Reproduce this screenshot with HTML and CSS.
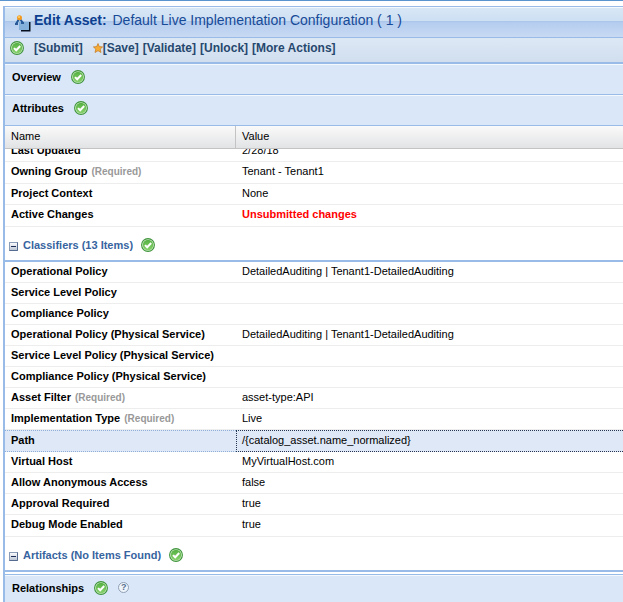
FILE: index.html
```
<!DOCTYPE html>
<html lang="en">
<head>
<meta charset="utf-8">
<title>Edit Asset</title>
<link rel="stylesheet" href="styles.css">
</head>
<body>
<svg class="defs" aria-hidden="true">
  <defs>
    <linearGradient id="green" x1="0" y1="0" x2="0" y2="1">
      <stop offset="0" stop-color="#55b043"/>
      <stop offset="1" stop-color="#86d26b"/>
    </linearGradient>
    <linearGradient id="metal" x1="0" y1="0" x2="0" y2="1">
      <stop offset="0" stop-color="#ffffff"/>
      <stop offset="1" stop-color="#b9c3d3"/>
    </linearGradient>
    <symbol id="check" viewBox="0 0 14 14">
      <circle cx="7" cy="7" r="6.4" fill="#d5efcc" stroke="#3f943c" stroke-width="1.1"/>
      <circle cx="7" cy="7" r="5.2" fill="url(#green)"/>
      <path d="M4 7.1 6.2 9.300 10.200 5" fill="none" stroke="#fff" stroke-width="2"/>
    </symbol>
    <symbol id="collapse" viewBox="0 0 9 9">
      <rect x=".5" y=".5" width="8" height="8" fill="url(#metal)" stroke="#8a9cb8"/>
      <path d="M.5 8.500h8v-8" fill="none" stroke="#566b90"/>
      <path d="M2 4.500h5" stroke="#1d2f57"/>
    </symbol>
  </defs>
</svg>
<main class="panel">
  <header class="title">
    <svg class="asset-icon" viewBox="0 0 16 17" aria-hidden="true">
      <path d="M6 7h9.500v9.500H6V15h8V7z" fill="#07101f"/>
      <path d="M4 7h2l1-1 2 1h5v8H4z" fill="#84b1dc"/>
      <path d="M4 4 1 9M5 4l3 4" stroke="#23599a" stroke-width="2" fill="none"/>
      <path d="M0 8h3v2H0zM6 7h3v2H6z" fill="#285b98"/>
      <circle cx="4.500" cy="2.800" r="2.500" fill="#f39a1d"/>
      <circle cx="4" cy="2" r="1" fill="#ffd26a"/>
    </svg>
    <h1><b>Edit Asset:</b> Default Live Implementation Configuration ( 1 )</h1>
  </header>
  <div class="toolbar">
    <svg class="check" aria-hidden="true"><use href="#check"/></svg>
    <button class="submit" type="button">[Submit]</button>
    <button class="save" type="button"><svg class="star" viewBox="0 0 10 10" aria-hidden="true"><path d="M5 .5 6.300 3.600 9.600 3.900 7.200 6.100 8 9.500 5 7.700 2 9.500 2.800 6.100 .4 3.900 3.700 3.600z" fill="#f7ac35" stroke="#c17820" stroke-width=".7"/></svg>[Save]</button>
    <button type="button">[Validate]</button>
    <button type="button">[Unlock]</button>
    <button type="button">[More Actions]</button>
  </div>
  <section class="band">
    <h2>Overview</h2>
    <svg class="check" aria-hidden="true"><use href="#check"/></svg>
  </section>
  <section class="band">
    <h2>Attributes</h2>
    <svg class="check" aria-hidden="true"><use href="#check"/></svg>
  </section>
  <table class="columns">
    <thead><tr><th class="name" scope="col">Name</th><th scope="col">Value</th></tr></thead>
  </table>
  <div class="scroller">
    <table class="rows scrolled">
      <tbody>
        <tr><th scope="row">Last Updated</th><td>2/28/18</td></tr>
        <tr class="tall"><th scope="row">Owning Group <small>(Required)</small></th><td>Tenant - Tenant1</td></tr>
        <tr><th scope="row">Project Context</th><td>None</td></tr>
        <tr class="tall"><th scope="row">Active Changes</th><td class="alert">Unsubmitted changes</td></tr>
      </tbody>
    </table>
    <div class="group">
      <button type="button"><svg class="collapse" aria-hidden="true"><use href="#collapse"/></svg>Classifiers (13 Items)</button>
      <svg class="check" aria-hidden="true"><use href="#check"/></svg>
    </div>
    <table class="rows">
      <tbody>
        <tr><th scope="row">Operational Policy</th><td>DetailedAuditing | Tenant1-DetailedAuditing</td></tr>
        <tr><th scope="row">Service Level Policy</th><td></td></tr>
        <tr><th scope="row">Compliance Policy</th><td></td></tr>
        <tr><th scope="row">Operational Policy (Physical Service)</th><td>DetailedAuditing | Tenant1-DetailedAuditing</td></tr>
        <tr><th scope="row">Service Level Policy (Physical Service)</th><td></td></tr>
        <tr><th scope="row">Compliance Policy (Physical Service)</th><td></td></tr>
        <tr><th scope="row">Asset Filter <small>(Required)</small></th><td>asset-type:API</td></tr>
        <tr><th scope="row">Implementation Type <small>(Required)</small></th><td>Live</td></tr>
        <tr class="tall selected"><th scope="row">Path</th><td>/{catalog_asset.name_normalized}</td></tr>
        <tr><th scope="row">Virtual Host</th><td>MyVirtualHost.com</td></tr>
        <tr><th scope="row">Allow Anonymous Access</th><td>false</td></tr>
        <tr><th scope="row">Approval Required</th><td>true</td></tr>
        <tr class="tall"><th scope="row">Debug Mode Enabled</th><td>true</td></tr>
      </tbody>
    </table>
    <div class="group">
      <button type="button"><svg class="collapse" aria-hidden="true"><use href="#collapse"/></svg>Artifacts (No Items Found)</button>
      <svg class="check" aria-hidden="true"><use href="#check"/></svg>
    </div>
  </div>
  <section class="band last">
    <h2>Relationships</h2>
    <svg class="check" aria-hidden="true"><use href="#check"/></svg>
    <button class="help" type="button" aria-label="Help">?</button>
  </section>
</main>
</body>
</html>
```
FILE: styles.css
```
* { box-sizing: border-box; }

body {
  margin: 0;
  min-height: 100vh;
  display: flex;
  flex-direction: column;
  border-top: 1px solid #5b93cf;
  padding: 5px 0 0 3px;
  background: #fff;
  color: #000;
  font: 11px/14px "Liberation Sans", Arial, sans-serif;
}

h1, h2 { margin: 0; font-size: 11px; }

button {
  display: flex;
  align-items: center;
  margin: 0;
  padding: 0;
  border: 0;
  background: none;
  color: inherit;
  font: inherit;
  white-space: nowrap;
  cursor: pointer;
}

.defs { position: absolute; width: 0; height: 0; }

.panel {
  flex: 1;
  display: flex;
  flex-direction: column;
  border-left: 2px solid #99bbe8;
}

.title {
  display: flex;
  align-items: center;
  gap: 3px;
  height: 32px;
  padding: 0 10px;
  border-top: 1px solid #99bbe8;
  border-bottom: 1px solid #99bbe8;
  box-shadow: inset 0 1px #f4f9fe;
  background: linear-gradient(#d9e8f6 0, #cddff3 14px, #a9c4e8 14px, #b5cdef 16px, #c8daf3 100%);
}
.title h1 {
  padding-bottom: 3px;
  color: #174a97;
  font-size: 14px;
  line-height: 17px;
  font-weight: 400;
  white-space: nowrap;
}
.title b { margin-right: 2px; color: #0c3f8f; }
.asset-icon { width: 16px; height: 17px; margin-top: 2px; }

.toolbar {
  display: flex;
  align-items: center;
  gap: 4px;
  height: 26px;
  padding: 0 5px 4px;
  border-bottom: 2px solid #99bbe8;
  background: linear-gradient(#dde8f5, #d0deee);
  color: #26486e;
  font-size: 12px;
  font-weight: 700;
}
.toolbar .submit,
.toolbar .save { margin-left: 6px; }

.check { flex: none; width: 14px; height: 14px; }
.star { width: 10px; height: 10px; }

.band {
  display: flex;
  align-items: center;
  gap: 10px;
  height: 31px;
  padding: 0 7px 4px;
  border-bottom: 1px solid #99bbe8;
  box-shadow: inset 0 1px #f4f9fe;
  background: #d9e7f8;
}
.band.last {
  flex: 1 0 auto;
  height: 30px;
  border-top: 1px solid #99bbe8;
  border-bottom: 0;
  margin-top: 2px;
}
.help {
  justify-content: center;
  width: 11px;
  height: 11px;
  border: 1px solid #8fa0b5;
  border-radius: 50%;
  background: #eef4fb;
  color: #55708f;
  font-size: 9px;
  line-height: 9px;
  font-weight: 700;
}

table { width: 100%; border-collapse: separate; border-spacing: 0; table-layout: fixed; }
th, td { padding: 0 6px; text-align: left; white-space: nowrap; }

.columns th {
  height: 23px;
  padding-bottom: 2px;
  border-bottom: 1px solid #c3c3c3;
  background: linear-gradient(#fafafa, #e2e3e5);
  font-weight: 400;
}
.columns .name { width: 231px; border-right: 1px solid #c3c3c3; }

.scroller { overflow: hidden; }
.scrolled { margin-top: -8px; }
.rows th { width: 231px; }
.rows th, .rows td { height: 21px; padding-bottom: 3px; border-bottom: 1px solid #ededed; }
.rows .tall th, .rows .tall td { height: 22px; }
.rows small { margin-left: 1px; color: #999; font-size: 10px; line-height: 10px; font-weight: 700; }
.rows .alert { color: #f00; font-weight: 700; }

.rows .selected th {
  border-top: 1px dotted #8faed8;
  border-bottom: 1px dotted #8faed8;
  background: #dfe8f6;
}
.rows .selected td {
  border: 1px dotted #26364f;
  border-right: 0;
  padding-left: 5px;
  background: #dfe8f6;
}

.group {
  display: flex;
  align-items: center;
  gap: 8px;
  height: 35px;
  border-bottom: 2px solid #99bbe8;
  padding: 2px 4px 0;
  color: #3764a0;
  font-weight: 700;
}
.group button { gap: 5px; }
.collapse { width: 9px; height: 9px; margin-top: 4px; }
```
